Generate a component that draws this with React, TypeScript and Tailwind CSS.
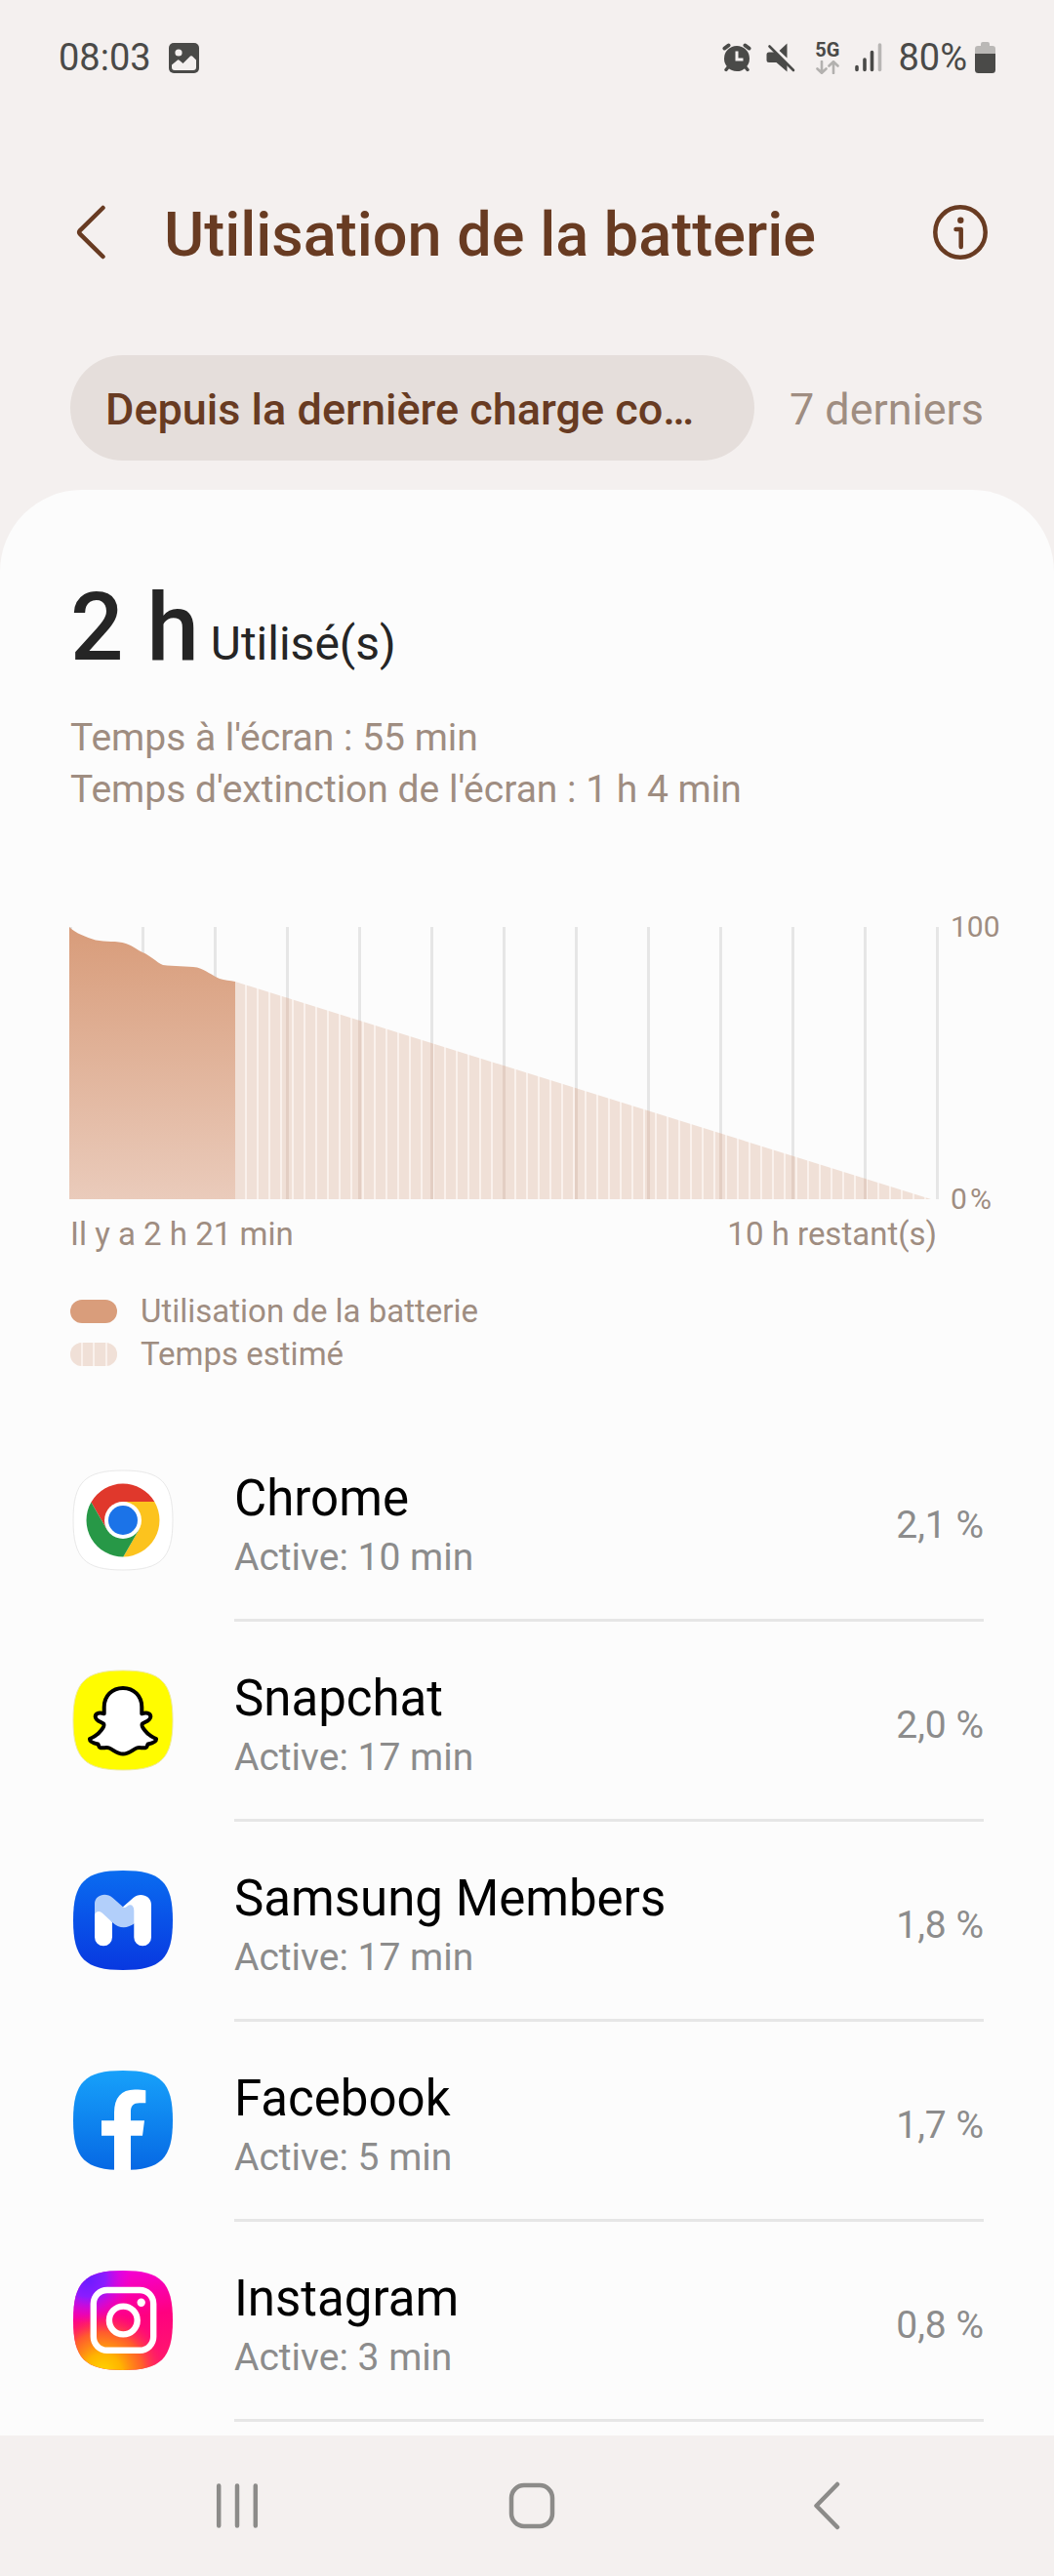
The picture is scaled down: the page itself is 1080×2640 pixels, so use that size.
import { useState } from 'react'
import type { ReactNode } from 'react'

const SQUIRCLE =
  'M54 3C93 3 105 15 105 54C105 93 93 105 54 105C15 105 3 93 3 54C3 15 15 3 54 3Z'

const ChromeIcon = () => (
  <svg viewBox="0 0 108 108" className="h-[108px] w-[108px]" aria-hidden="true">
    <path d={SQUIRCLE} fill="#fff" stroke="#e9e9e9" strokeWidth="1" />
    <path d="M21.4 35.5A37.5 37.5 0 0 1 86.3 35H54L37.5 63.5Z" fill="#e0382c" />
    <path
      d="M86.3 35A37.5 37.5 0 0 1 54.3 91.5L70.5 63.5L54 35Z"
      fill="#fcc31e"
    />
    <path
      d="M54.3 91.5A37.5 37.5 0 0 1 21.4 35.5L37.5 63.5H70.5Z"
      fill="#279847"
    />
    <circle cx="54" cy="54" r="19" fill="#fff" />
    <circle cx="54" cy="54" r="15" fill="#1b73e8" />
  </svg>
)

const SnapchatIcon = () => (
  <svg viewBox="0 0 108 108" className="h-[108px] w-[108px]" aria-hidden="true">
    <path d={SQUIRCLE} fill="#fffc00" stroke="#eee9a0" strokeWidth="1" />
    <path
      d="M54 21C43 21 34.7 29 34.7 40.5V47.3C31 46 26 46 25.7 50C25.5 54 31 55.5 34 57.5C35.5 59 33.5 62 31.5 64.5C28 69 23.5 71.5 20 73C19.5 76 24 77.5 28.5 78.5C29.5 80 29 82 31 82.3C35 82.5 37.5 81.5 40 82.5C44.5 84.5 48 88.5 54 88.5C60 88.5 63.5 84.5 68 82.5C70.5 81.5 73 82.5 77 82.3C79 82 78.5 80 79.5 78.5C84 77.5 88.5 76 88 73C84.5 71.5 80 69 76.5 64.5C74.5 62 72.5 59 74 57.5C77 55.5 82.5 54 82.3 50C82 46 77 46 73.3 47.3V40.5C73.3 29 65 21 54 21Z"
      fill="#fff"
      stroke="#000"
      strokeWidth="4"
      strokeLinejoin="round"
    />
  </svg>
)

const MembersIcon = () => (
  <svg viewBox="0 0 108 108" className="h-[108px] w-[108px]" aria-hidden="true">
    <defs>
      <linearGradient id="members" x1="0" y1="0" x2="0" y2="1">
        <stop offset="0" stopColor="#0a6cf0" />
        <stop offset="1" stopColor="#0838e0" />
      </linearGradient>
    </defs>
    <path d={SQUIRCLE} fill="url(#members)" />
    <path
      d="M25 50V37C25 28 36.5 24.5 43.5 31L54 40.3L60 36L66 40V57C59 62.5 50 63 43 56L34 50Z"
      fill="#b2cffa"
    />
    <path
      d="M25 71.3V49C25.5 44.5 30 43.8 33 46.8L43 56V71.3A9 9 0 0 1 25 71.3Z"
      fill="#fff"
    />
    <path
      d="M54 40.3L64.5 31C71 25 83 28.5 83 38V71.4A8.85 8.85 0 0 1 65.3 71.4V44C65.3 38.5 61.5 37 58.5 39.5C57 41 55.5 41.5 54 40.3Z"
      fill="#fff"
    />
  </svg>
)

const FacebookIcon = () => (
  <svg viewBox="0 0 108 108" className="h-[108px] w-[108px]" aria-hidden="true">
    <defs>
      <linearGradient id="facebook" x1="0" y1="0" x2="0" y2="1">
        <stop offset="0" stopColor="#17a1fa" />
        <stop offset="1" stopColor="#0668e4" />
      </linearGradient>
    </defs>
    <path d={SQUIRCLE} fill="url(#facebook)" />
    <path
      d="M45 105V69.7H32V54.3H45V46C45 31 52 22.5 66 22.5C70.5 22.5 75 22.8 77.3 23.3V36.3H71C64.5 36.3 62 39.5 62 45V54.3H76L74 69.7H62V105Z"
      fill="#fff"
    />
  </svg>
)

const InstagramIcon = () => (
  <svg viewBox="0 0 108 108" className="h-[108px] w-[108px]" aria-hidden="true">
    <defs>
      <linearGradient id="insta-base" x1="0.4" y1="0" x2="0.6" y2="1">
        <stop offset="0" stopColor="#f400d8" />
        <stop offset="0.5" stopColor="#ff0080" />
        <stop offset="1" stopColor="#ff1a6a" />
      </linearGradient>
      <radialGradient id="insta-warm" cx="0.3" cy="1.02" r="0.62">
        <stop offset="0" stopColor="#ffd500" />
        <stop offset="0.3" stopColor="#ffb400" />
        <stop offset="0.65" stopColor="#ff6a20" stopOpacity="0.85" />
        <stop offset="1" stopColor="#ff2060" stopOpacity="0" />
      </radialGradient>
      <radialGradient id="insta-cool" cx="0.14" cy="0.08" r="0.45">
        <stop offset="0" stopColor="#6a1cff" />
        <stop offset="0.4" stopColor="#8a1cff" />
        <stop offset="1" stopColor="#e000f0" stopOpacity="0" />
      </radialGradient>
    </defs>
    <path d={SQUIRCLE} fill="url(#insta-base)" />
    <path d={SQUIRCLE} fill="url(#insta-warm)" />
    <path d={SQUIRCLE} fill="url(#insta-cool)" />
    <g fill="none" stroke="#fff" strokeWidth="6.4">
      <rect x="23.8" y="23" width="61.4" height="61.8" rx="14" />
      <circle cx="54.3" cy="54" r="14.4" />
    </g>
    <circle cx="72.7" cy="35.7" r="4.2" fill="#fff" />
  </svg>
)

type AppUsage = {
  name: string
  active: string
  percent: string
  icon: ReactNode
}

const apps: AppUsage[] = [
  {
    name: 'Chrome',
    active: 'Active: 10 min',
    percent: '2,1 %',
    icon: <ChromeIcon />,
  },
  {
    name: 'Snapchat',
    active: 'Active: 17 min',
    percent: '2,0 %',
    icon: <SnapchatIcon />,
  },
  {
    name: 'Samsung Members',
    active: 'Active: 17 min',
    percent: '1,8 %',
    icon: <MembersIcon />,
  },
  {
    name: 'Facebook',
    active: 'Active: 5 min',
    percent: '1,7 %',
    icon: <FacebookIcon />,
  },
  {
    name: 'Instagram',
    active: 'Active: 3 min',
    percent: '0,8 %',
    icon: <InstagramIcon />,
  },
]

const tabs = ['Depuis la dernière charge co…', '7 derniers']

const StatusBar = () => (
  <div className="flex h-[118px] items-center justify-between px-[60px] text-[38px] text-[#4a4a48]">
    <div className="flex items-center gap-[18px]">
      <span>08:03</span>
      <svg viewBox="0 0 31 31" className="h-[31px] w-[31px]" aria-hidden="true">
        <rect width="31" height="31" rx="5" fill="#4a4a48" />
        <circle cx="10" cy="10" r="3.6" fill="#f4f0ef" />
        <path
          d="M3 22.5L9 17.5Q10 17 11 18L14.5 21L22 13.5Q23 12.8 24 13.5L28 17.5V25Q28 28 25 28H6Q3 28 3 25Z"
          fill="#f4f0ef"
        />
      </svg>
    </div>
    <div className="flex items-center">
      <svg
        viewBox="0 0 30 30"
        className="mr-[15px] h-[30px] w-[30px]"
        aria-hidden="true"
      >
        <circle cx="15" cy="16" r="13" fill="#4a4a48" />
        <g stroke="#4a4a48" strokeWidth="4" strokeLinecap="round">
          <path d="M2.5 5.5L6.5 2.5M27.5 5.5L23.5 2.5" />
          <path d="M6 25L4 27.5M24 25L26 27.5" strokeWidth="3.4" />
        </g>
        <path d="M15 8.5V17H21.5" fill="none" stroke="#f4f0ef" strokeWidth="3" />
      </svg>
      <svg
        viewBox="0 0 30 30"
        className="mr-5 h-[30px] w-[30px]"
        aria-hidden="true"
      >
        <path
          d="M13.5 8L21.5 0.5V15.5ZM0.5 12Q0.5 9.5 3 9.5H8.5L21.5 22V29.5L10.5 20H3Q0.5 20 0.5 17.5Z"
          fill="#4a4a48"
        />
        <path
          d="M3.5 3.5L28 28"
          stroke="#4a4a48"
          strokeWidth="2.6"
          strokeLinecap="round"
        />
        <path d="M5.8 2L30 26" stroke="#f4f0ef" strokeWidth="1.6" />
      </svg>
      <div className="mr-4 flex flex-col items-center gap-[3px]">
        <span className="text-[20px] leading-4 font-bold">5G</span>
        <svg
          viewBox="0 0 24 14"
          className="h-[14px] w-6"
          fill="none"
          stroke="#b3b1af"
          strokeWidth="2.6"
          strokeLinecap="round"
          aria-hidden="true"
        >
          <path d="M6 1V12.5M1.5 8.5L6 12.8L10.5 8.5M18 13V1.5M13.5 5.5L18 1.2L22.5 5.5" />
        </svg>
      </div>
      <svg
        viewBox="0 0 28 30"
        className="mr-4 h-[30px] w-7"
        strokeWidth="3.6"
        strokeLinecap="round"
        stroke="#4a4a48"
        aria-hidden="true"
      >
        <path d="M2 24.5V27.5M10 17V27.5M17.5 9.5V27.5" />
        <path d="M25.5 2V27.5" stroke="#b8b6b4" />
      </svg>
      <span className="mr-2">80%</span>
      <svg viewBox="0 0 21 32" className="h-8 w-[21px]" aria-hidden="true">
        <path
          d="M6 4V2Q6 0 8 0H13Q15 0 15 2V4H18Q21 4 21 7V13H0V7Q0 4 3 4Z"
          fill="#bab8b6"
        />
        <path d="M0 12H21V28.5Q21 32 17.5 32H3.5Q0 32 0 28.5Z" fill="#4a4a48" />
      </svg>
    </div>
  </div>
)

// 12 columns of 74 units, one per hour
const BatteryChart = () => (
  <svg
    viewBox="0 0 888 279"
    preserveAspectRatio="none"
    className="h-[279px] min-w-0 flex-1 overflow-visible"
    role="img"
    aria-label="Utilisation de la batterie"
  >
    <defs>
      <linearGradient id="usage" x1="0" y1="0" x2="0" y2="1">
        <stop offset="0" stopColor="#d89c7a" />
        <stop offset="1" stopColor="#eacbbb" />
      </linearGradient>
      <pattern
        id="stripes"
        width="12"
        height="279"
        patternUnits="userSpaceOnUse"
      >
        <rect width="12" height="279" fill="#f0e0d7" />
        <rect width="1" height="279" fill="#faf1ec" />
        <rect x="11" width="1" height="279" fill="#faf1ec" />
      </pattern>
      <clipPath id="estimated">
        <path d="M169 56L882 279H169Z" />
      </clipPath>
    </defs>
    {Array.from({ length: 13 }, (_, i) => (
      <rect
        key={i}
        x={i * 74 - 1}
        y="0"
        width="3"
        height="279"
        fill="#e6e6e6"
      />
    ))}
    <g clipPath="url(#estimated)">
      <rect width="888" height="279" fill="url(#stripes)" />
      {Array.from({ length: 9 }, (_, i) => (
        <rect
          key={i}
          x={(i + 3) * 74 - 1}
          y="0"
          width="3"
          height="279"
          fill="#e3cec3"
        />
      ))}
    </g>
    <path
      d="M-1 0C6 7 16 10 26 13.5C36 15.5 48 14 57 17C64 19 69 24 74 26C82 29 88 36 95 39C106 40.5 120 40 130 41.5C138 43.5 146 50 153 53C158 54.5 164 55 169 56V279H-1Z"
      fill="url(#usage)"
    />
  </svg>
)

const App = () => {
  const [activeTab, setActiveTab] = useState(0)

  return (
    <div className="flex min-h-screen flex-col bg-[#f4f0ef] font-['Roboto',sans-serif]">
      <StatusBar />
      <header className="flex h-[246px] items-center px-[68px] text-[#683b22]">
        <button
          type="button"
          aria-label="Retour"
          className="flex w-[100px] shrink-0 pb-[6px] pl-[9px]"
        >
          <svg
            viewBox="0 0 32 56"
            className="h-14 w-8"
            fill="none"
            stroke="currentColor"
            strokeWidth="4.5"
            strokeLinecap="round"
            strokeLinejoin="round"
            aria-hidden="true"
          >
            <path d="M28.5 3L4.8 26.3Q3.5 28 4.8 29.7L28.5 53" />
          </svg>
        </button>
        <h1 className="flex-1 text-[63px] font-medium">
          Utilisation de la batterie
        </h1>
        <button type="button" aria-label="Informations" className="pb-[6px]">
          <svg
            viewBox="0 0 56 56"
            className="h-14 w-14"
            fill="none"
            stroke="currentColor"
            strokeWidth="4.5"
            strokeLinecap="round"
            strokeLinejoin="round"
            aria-hidden="true"
          >
            <circle cx="28" cy="28" r="25.7" />
            <path d="M23.5 25H28.7V43" />
            <circle cx="28.3" cy="15.8" r="3.2" fill="currentColor" stroke="none" />
          </svg>
        </button>
      </header>

      <div className="flex px-[72px] pb-[30px] text-[45px]">
        {tabs.map((tab, tabIndex) => (
          <button
            key={tab}
            type="button"
            aria-pressed={tabIndex === activeTab}
            onClick={() => setActiveTab(tabIndex)}
            className={
              tabIndex === activeTab
                ? 'h-[108px] min-w-0 flex-1 truncate rounded-full bg-[#e5dedb] px-9 pt-[3px] text-left font-medium text-[#683b22]'
                : 'h-[108px] shrink-0 pt-[3px] pl-9 text-[#9f8d81]'
            }
          >
            {tab}
          </button>
        ))}
      </div>

      <main className="flex-1 rounded-t-[84px] bg-[#fcfcfc] pt-[93px] pb-[14px]">
        <section className="pl-[72px] text-[#9f8d81]">
          <h2 className="flex items-baseline gap-3 leading-none text-[#252525]">
            <span className="text-[96px] font-medium">2 h</span>
            <span className="text-[48px] font-normal">Utilisé(s)</span>
          </h2>
          <div className="mt-[39px] text-[39px] leading-[53px]">
            <p>Temps à l'écran : 55 min</p>
            <p>Temps d'extinction de l'écran : 1 h 4 min</p>
          </div>

          <div className="mt-[114px] flex">
            <BatteryChart />
            <div className="-my-[18px] flex w-[120px] shrink-0 flex-col justify-between pl-[14px] text-[30px] leading-9">
              <span>100</span>
              <span>0&#8202;%</span>
            </div>
          </div>
          <div className="mt-[14px] mr-[120px] flex justify-between text-[33px] leading-[44px]">
            <span>Il y a 2 h 21 min</span>
            <span>10 h restant(s)</span>
          </div>

          <ul className="mt-[35px] text-[33px] leading-[44px]">
            <li className="flex items-center gap-6">
              <span className="h-6 w-12 rounded-full bg-[#d99d7b]" />
              Utilisation de la batterie
            </li>
            <li className="flex items-center gap-6">
              <span className="flex h-6 w-12 gap-[2px] overflow-hidden rounded-full bg-[#faf1ec]">
                <span className="flex-1 bg-[#f0e0d7]" />
                <span className="flex-1 bg-[#f0e0d7]" />
                <span className="flex-1 bg-[#f0e0d7]" />
                <span className="flex-1 bg-[#f0e0d7]" />
              </span>
              Temps estimé
            </li>
          </ul>
        </section>

        <ul className="mt-[47px] px-[72px]">
          {apps.map((app) => (
            <li key={app.name} className="flex h-[205px] items-center">
              <div className="w-[168px] shrink-0 pb-[3px]">{app.icon}</div>
              <div className="flex h-full min-w-0 flex-1 items-center justify-between border-b-3 border-[#e6e6e6] pt-[10px] text-[39px] leading-[54px] text-[#8c8c8c]">
                <div>
                  <h3 className="text-[51px] leading-[66px] text-black">
                    {app.name}
                  </h3>
                  <p>{app.active}</p>
                </div>
                <span>{app.percent}</span>
              </div>
            </li>
          ))}
        </ul>
      </main>

      <nav className="grid h-36 grid-cols-3 pr-[82px] pl-[92px] text-[#8c8b89]">
        <button
          type="button"
          aria-label="Applications récentes"
          className="flex items-center justify-center"
        >
          <svg
            viewBox="0 0 48 48"
            className="h-12 w-12"
            stroke="currentColor"
            strokeWidth="4.5"
            strokeLinecap="round"
            aria-hidden="true"
          >
            <path d="M5.2 3.5V44.5M24 3.5V44.5M42.8 3.5V44.5" />
          </svg>
        </button>
        <button
          type="button"
          aria-label="Accueil"
          className="flex items-center justify-center"
        >
          <svg
            viewBox="0 0 48 48"
            className="h-12 w-12"
            fill="none"
            stroke="currentColor"
            strokeWidth="4.5"
            aria-hidden="true"
          >
            <rect x="3" y="3" width="42" height="42" rx="13" />
          </svg>
        </button>
        <button
          type="button"
          aria-label="Précédent"
          className="flex items-center justify-center"
        >
          <svg
            viewBox="0 0 28 50"
            className="h-[50px] w-7"
            fill="none"
            stroke="currentColor"
            strokeWidth="4.5"
            strokeLinecap="round"
            strokeLinejoin="round"
            aria-hidden="true"
          >
            <path d="M25 3L3.5 25L25 47" />
          </svg>
        </button>
      </nav>
    </div>
  )
}

export default App
